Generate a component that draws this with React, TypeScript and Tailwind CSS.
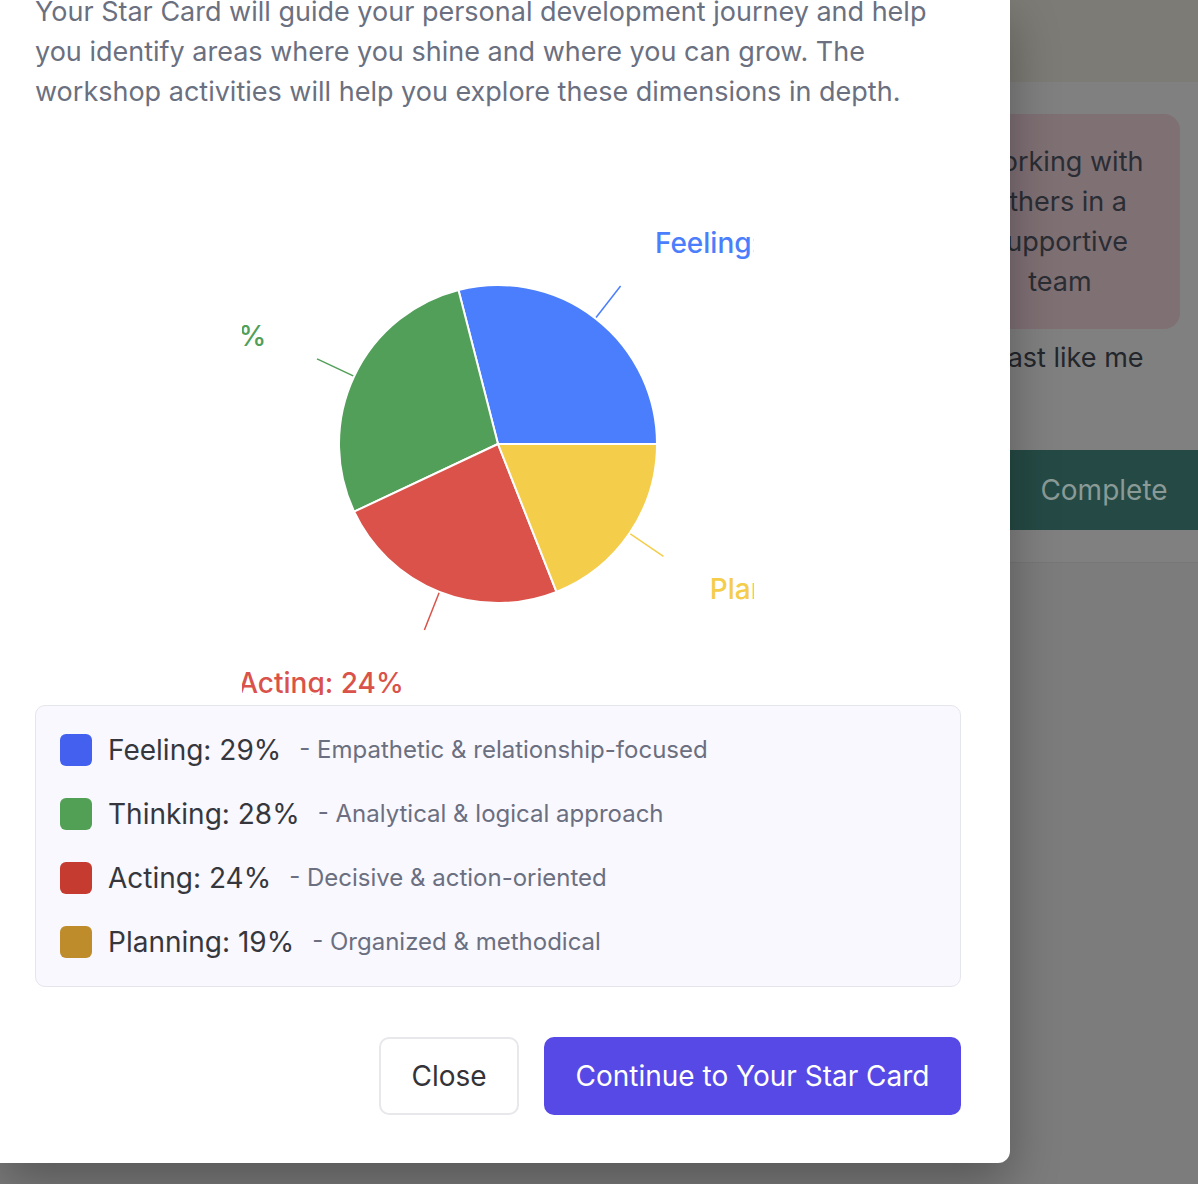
import React from "react";

type Slice = {
  name: string;
  value: number;
  fill: string;
  swatch: string;
  note: string;
};

const slices: Slice[] = [
  { name: "Feeling", value: 29, fill: "#4b7efc", swatch: "#4361ee", note: "Empathetic & relationship-focused" },
  { name: "Thinking", value: 28, fill: "#519f58", swatch: "#51a055", note: "Analytical & logical approach" },
  { name: "Acting", value: 24, fill: "#da5249", swatch: "#c63b2f", note: "Decisive & action-oriented" },
  { name: "Planning", value: 19, fill: "#f4cd4b", swatch: "#be8c2a", note: "Organized & methodical" },
];

const font = { fontFamily: "Inter, 'Noto Sans', sans-serif" };

function polar(cx: number, cy: number, r: number, deg: number) {
  const a = (deg * Math.PI) / 180;
  return [cx + r * Math.cos(a), cy - r * Math.sin(a)];
}

function StarPie() {
  const cx = 256;
  const cy = 250;
  const r = 159;
  const total = slices.reduce((s, x) => s + x.value, 0);
  let start = 0;

  return (
    <svg width={512} height={501} viewBox="0 0 512 501" className="block mx-auto">
      {slices.map((s) => {
        const sweep = (s.value / total) * 360;
        const end = start + sweep;
        const mid = start + sweep / 2;
        const [x1, y1] = polar(cx, cy, r, start);
        const [x2, y2] = polar(cx, cy, r, end);
        const large = sweep > 180 ? 1 : 0;
        const d = `M ${cx} ${cy} L ${x1} ${y1} A ${r} ${r} 0 ${large} 0 ${x2} ${y2} Z`;
        const [lx1, ly1] = polar(cx, cy, r + 1, mid);
        const [lx2, ly2] = polar(cx, cy, r + 41, mid);
        const [tx, ty] = polar(cx, cy, 256, mid);
        const anchor = tx > cx ? "start" : "end";
        start = end;
        return (
          <g key={s.name}>
            <path d={d} fill={s.fill} stroke="#ffffff" strokeWidth={2} />
            <line x1={lx1} y1={ly1} x2={lx2} y2={ly2} stroke={s.fill} strokeWidth={1.5} />
            <text
              x={tx}
              y={ty + 1}
              textAnchor={anchor}
              dominantBaseline="central"
              fill={s.fill === "#da5249" ? "#d9534a" : s.fill}
              fontSize={28}
              fontWeight={500}
              style={font}
            >
              {s.name}: {s.value}%
            </text>
          </g>
        );
      })}
    </svg>
  );
}

export default function App() {
  return (
    <div className="relative h-[1184px] overflow-hidden bg-[#7c7c7c]" style={font}>
      {/* page behind the dialog, dimmed */}
      <div className="h-[82px] bg-[#7d7b75]" />
      <div className="h-[481px] bg-[#808080] border-b border-[#777777] pt-[32px] pb-[32px] flex flex-col items-end">
        <div className="mr-[18px] w-[240px] h-[215px] rounded-2xl bg-[#7f7074] px-[30px] pt-[28px] text-center text-[27px] leading-[40px] text-[#2a2d33]">
          Working with others in a supportive team
        </div>
        <div className="mr-[18px] w-[240px] mt-[9px] text-center text-[27px] leading-[40px] text-[#23262b]">
          Least like me
        </div>
        <div className="mt-auto w-[188px] h-[80px] bg-[#254a45] flex items-center justify-center text-[28px] text-[#8a9a96]">
          Complete
        </div>
      </div>

      {/* dialog */}
      <div className="absolute left-0 top-0 w-[1010px] bg-white rounded-br-[12px] shadow-[0_20px_50px_rgba(0,0,0,0.3)] pl-[35px] pr-[49px] pb-[48px]">
        <p className="-mt-[8px] text-[27px] leading-[40px] text-[#6b7080]">
          Your Star Card will guide your personal development journey and help you identify areas where you shine and where you can grow. The workshop activities will help you explore these dimensions in depth.
        </p>

        <div className="mt-[82px]">
          <StarPie />
        </div>

        <div className="mt-[10px] rounded-[10px] border border-[#e5e6ec] bg-[#f8f8fe] px-[24px] py-[24px] flex flex-col gap-[24px]">
          {slices.map((s) => (
            <div key={s.name} className="h-[40px] flex items-center">
              <span className="w-[32px] h-[32px] rounded-[6px] shrink-0" style={{ backgroundColor: s.swatch }} />
              <span className="ml-[16px] text-[28px] text-[#36373d]">
                {s.name}: {s.value}%
              </span>
              <span className="ml-[18px] text-[24px] text-[#6b6f80]">- {s.note}</span>
            </div>
          ))}
        </div>

        <div className="mt-[50px] flex justify-end gap-[25px]">
          <button className="h-[78px] w-[140px] rounded-[10px] border-2 border-[#e7e7ec] bg-white text-[28px] text-[#333338]">
            Close
          </button>
          <button className="h-[78px] w-[417px] rounded-[10px] bg-[#5649e5] text-[28px] text-white">
            Continue to Your Star Card
          </button>
        </div>
      </div>
    </div>
  );
}
